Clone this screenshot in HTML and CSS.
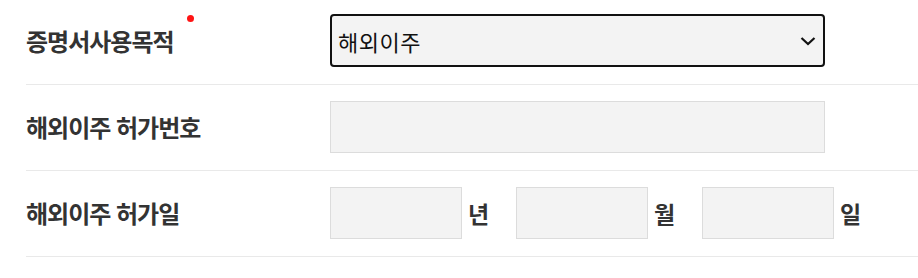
FILE: index.html
```html
<!DOCTYPE html>
<html lang="ko">
<head>
<meta charset="utf-8">
<link rel="stylesheet" href="styles.css">
</head>
<body>
<div class="form">
  <div class="row row-first">
    <div class="label"><span class="label-text">증명서사용목적</span><span class="req"></span></div>
    <div class="field">
      <div class="select">
        <span class="select-value">해외이주</span>
        <svg class="chev" width="16" height="10" viewBox="0 0 16 10"><path d="M1.5 2 L8 8 L14.5 2" fill="none" stroke="#111" stroke-width="2.2"/></svg>
      </div>
    </div>
  </div>
  <div class="row">
    <div class="label"><span class="label-text">해외이주 허가번호</span></div>
    <div class="field">
      <div class="input wide"></div>
    </div>
  </div>
  <div class="row">
    <div class="label"><span class="label-text">해외이주 허가일</span></div>
    <div class="field date">
      <div class="input short"></div><span class="unit">년</span>
      <div class="input short"></div><span class="unit">월</span>
      <div class="input short"></div><span class="unit">일</span>
    </div>
  </div>
</div>
</body>
</html>
```

FILE: styles.css
```css
html, body {
  margin: 0;
  padding: 0;
  background: #fff;
}
body {
  font-family: "Noto Sans CJK KR", "Noto Sans", sans-serif;
  color: #333;
}
.form {
  margin-left: 26px;
}
.row {
  display: flex;
  align-items: center;
  padding: 16px 0 17px;
  border-bottom: 1px solid #e9e9e9;
}
.row-first {
  padding-top: 14px;
  padding-bottom: 17px;
}
.label {
  width: 304px;
  flex: none;
  position: relative;
  font-size: 24px;
  font-weight: 700;
  letter-spacing: -1px;
  color: #333;
  line-height: 1;
}
.label-text {
  display: inline-block;
}
.req {
  position: absolute;
  left: 161px;
  top: -14px;
  width: 7px;
  height: 7px;
  border-radius: 50%;
  background: #ff1414;
}
.field {
  display: flex;
  align-items: center;
}
.select {
  box-sizing: border-box;
  width: 495px;
  height: 53px;
  border: 2px solid #111;
  border-radius: 4px;
  background: #f3f3f3;
  display: flex;
  align-items: center;
  justify-content: space-between;
  padding: 0 7px 0 6px;
}
.select-value {
  font-size: 22px;
  color: #111;
  letter-spacing: 0.5px;
}
.chev {
  display: block;
}
.input {
  box-sizing: border-box;
  height: 52px;
  border: 1px solid #dcdcdc;
  background: #f3f3f3;
}
.wide {
  width: 495px;
}
.short {
  width: 132px;
}
.unit {
  width: 54px;
  box-sizing: border-box;
  padding-left: 6px;
  font-size: 23px;
  font-weight: 700;
  color: #333;
}
```
